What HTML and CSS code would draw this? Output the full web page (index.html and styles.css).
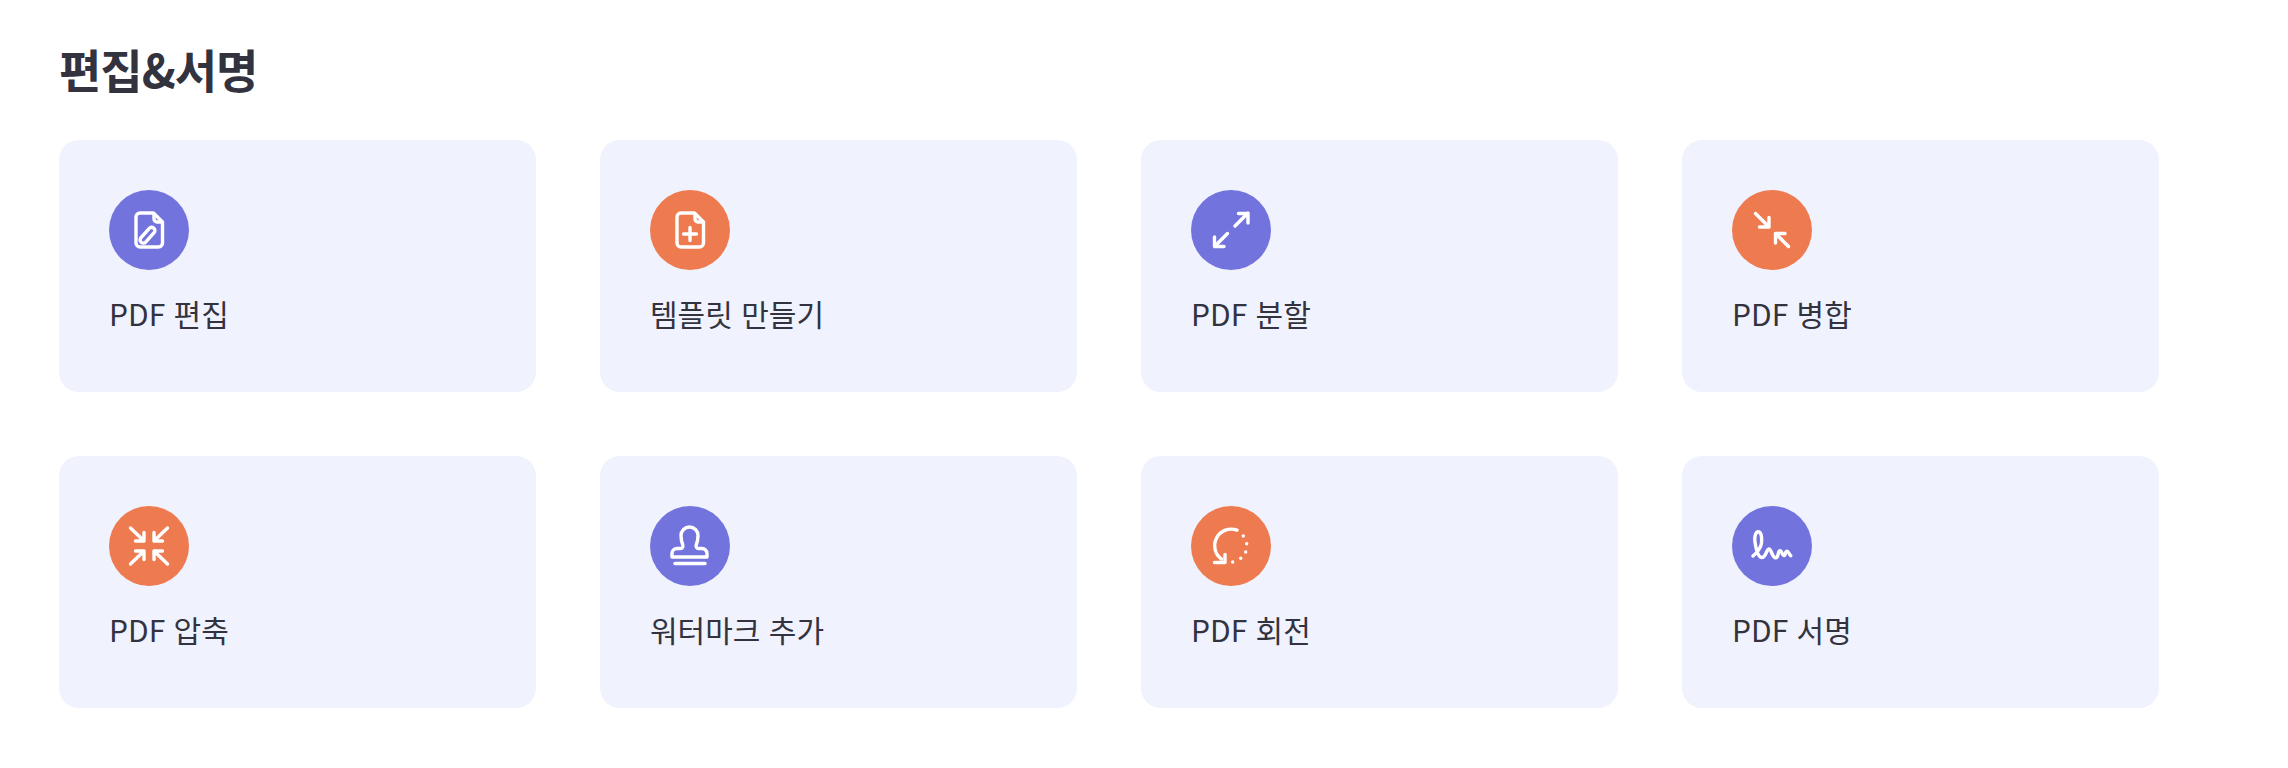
FILE: index.html
```html
<!DOCTYPE html>
<html lang="ko">
<head>
<meta charset="utf-8">
<title>편집&amp;서명</title>
<link rel="stylesheet" href="styles.css">
</head>
<body>
<main class="section">
  <h2 class="title">편집&amp;서명</h2>
  <div class="grid">
    <a class="card">
      <span class="badge purple"><svg class="icon" viewBox="0 0 80 80"><path d="M31 23H44.5L53.5 32V53a4 4 0 0 1-4 4H31a4 4 0 0 1-4-4V27a4 4 0 0 1 4-4z"/><path d="M45 24V29a3 3 0 0 0 3 3h5"/><rect x="29" y="42" width="19" height="6.4" rx="3.2" transform="rotate(-48 38.5 45.2)"/></svg></span>
      <span class="label">PDF 편집</span>
    </a>
    <a class="card">
      <span class="badge orange"><svg class="icon" viewBox="0 0 80 80"><path d="M31 23H44.5L53.5 32V53a4 4 0 0 1-4 4H31a4 4 0 0 1-4-4V27a4 4 0 0 1 4-4z"/><path d="M45 24V29a3 3 0 0 0 3 3h5"/><path d="M40 37.5V50.5M33.5 44H46.5"/></svg></span>
      <span class="label">템플릿 만들기</span>
    </a>
    <a class="card">
      <span class="badge purple"><svg class="icon" viewBox="0 0 80 80"><path d="M57 23L44 36M47.5 23.5H57V33"/><path d="M23.5 56.5L36.5 43.5M23.5 47V56.5H33"/></svg></span>
      <span class="label">PDF 분할</span>
    </a>
    <a class="card">
      <span class="badge orange"><svg class="icon" viewBox="0 0 80 80"><path d="M23.5 23.5L37 37M37 27.5V37H27.5"/><path d="M43.5 43.5L56.5 56.5M43.5 53V43.5H53"/></svg></span>
      <span class="label">PDF 병합</span>
    </a>
    <a class="card">
      <span class="badge orange"><svg class="icon" viewBox="0 0 80 80"><path d="M21.5 22L35 35M35 26.5V35H26.5"/><path d="M58.5 22L45 35M45 26.5V35H53.5"/><path d="M21.5 58L35 45M35 53.5V45H26.5"/><path d="M58.5 58L45 45M45 53.5V45H53.5"/></svg></span>
      <span class="label">PDF 압축</span>
    </a>
    <a class="card">
      <span class="badge purple"><svg class="icon" viewBox="0 0 80 80"><path d="M22 51H57V47.5a5 5 0 0 0-5-5H48.5a2.5 2.5 0 0 1-2.3-3.5C47 37 48 34 48 29.5A8.5 8.5 0 0 0 31 29.5C31 34 32 37 32.8 39a2.5 2.5 0 0 1-2.3 3.5H27a5 5 0 0 0-5 5z"/><path d="M25 57.5H55"/></svg></span>
      <span class="label">워터마크 추가</span>
    </a>
    <a class="card">
      <span class="badge orange"><svg class="icon" viewBox="0 0 80 80"><path d="M46 24.2A16.5 16.5 0 0 0 30.5 53"/><path d="M34 48.5V56.5H23.5"/><g class="dots"><circle cx="52.3" cy="30" r="1.7"/><circle cx="55.7" cy="37.7" r="1.7"/><circle cx="54.7" cy="46" r="1.7"/><circle cx="49.7" cy="52.3" r="1.7"/><circle cx="41.7" cy="56" r="1.7"/></g></svg></span>
      <span class="label">PDF 회전</span>
    </a>
    <a class="card">
      <span class="badge purple"><svg class="icon" viewBox="0 0 80 80"><path d="M21 50C24.5 47 28 44 29.3 38C30.3 31 29 25.8 26.3 25.8C23.5 25.8 22.3 31 23 36C24 43 26 51.5 30 51.5C34 51.5 34.5 43 37 43C39.5 43 40 51.8 43.7 51.8C47 51.8 45.5 44.8 48 44.8C50 44.8 50 49.6 52 49.6C53.7 49.6 53 45.2 55 45.2C56.3 45.2 57.2 48 58.7 49.7"/></svg></span>
      <span class="label">PDF 서명</span>
    </a>
  </div>
</main>
</body>
</html>
```
FILE: styles.css
```css
* { box-sizing: border-box; }

html, body {
  margin: 0;
  padding: 0;
  background: #fff;
}

body {
  font-family: "Noto Sans CJK KR", "Noto Sans", sans-serif;
  color: #33333f;
}

.section {
  padding: 33px 0 0 59px;
}

.title {
  margin: 0 0 37px;
  font-size: 46px;
  line-height: 70px;
  font-weight: 700;
  letter-spacing: -1px;
}

.grid {
  display: grid;
  grid-template-columns: repeat(4, 477px);
  grid-auto-rows: 252px;
  column-gap: 64px;
  row-gap: 64px;
}

.card {
  display: flex;
  flex-direction: column;
  align-items: flex-start;
  padding: 50px;
  background: #f0f2fd;
  border-radius: 20px;
}

.badge {
  display: block;
  width: 80px;
  height: 80px;
  border-radius: 50%;
}

.purple { background: #7373de; }
.orange { background: #ee7a50; }

.icon {
  display: block;
  width: 80px;
  height: 80px;
  fill: none;
  stroke: #fff;
  stroke-width: 3.4;
  stroke-linecap: round;
  stroke-linejoin: round;
}

.dots {
  fill: #fff;
  stroke: none;
}

.label {
  margin-top: 21px;
  font-size: 30px;
  line-height: 44px;
  font-weight: 400;
  white-space: nowrap;
}
```
